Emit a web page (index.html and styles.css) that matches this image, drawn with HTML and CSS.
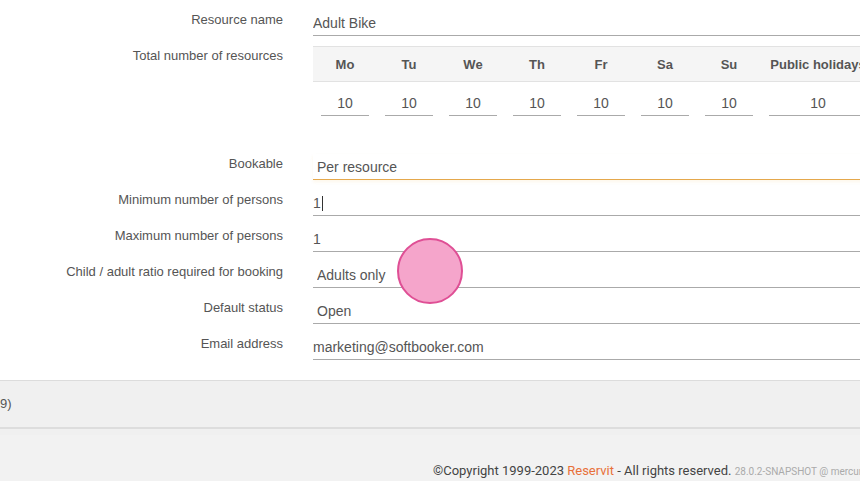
FILE: index.html
```html
<!DOCTYPE html>
<html lang="en">
<head>
    <meta charset="UTF-8">
    <meta name="viewport" content="width=device-width, initial-scale=1.0">
    <title>Resource settings</title>
    <link rel="stylesheet" href="styles.css">
</head>
<body>
    <div class="page">
        <form class="resource-form">
            <div class="row">
                <label>Resource name</label>
                <input class="field" type="text" value="Adult Bike">
            </div>
            <div class="row row-table">
                <label>Total number of resources</label>
                <table class="week-table">
                    <colgroup>
                        <col><col><col><col><col><col><col>
                        <col class="holiday">
                    </colgroup>
                    <thead>
                        <tr>
                            <th>Mo</th><th>Tu</th><th>We</th><th>Th</th>
                            <th>Fr</th><th>Sa</th><th>Su</th>
                            <th>Public holidays</th>
                        </tr>
                    </thead>
                    <tbody>
                        <tr>
                            <td><input type="text" value="10"></td>
                            <td><input type="text" value="10"></td>
                            <td><input type="text" value="10"></td>
                            <td><input type="text" value="10"></td>
                            <td><input type="text" value="10"></td>
                            <td><input type="text" value="10"></td>
                            <td><input type="text" value="10"></td>
                            <td><input type="text" value="10"></td>
                        </tr>
                    </tbody>
                </table>
            </div>
            <div class="row">
                <label>Bookable</label>
                <select class="field select active">
                    <option>Per resource</option>
                </select>
            </div>
            <div class="row">
                <label>Minimum number of persons</label>
                <div class="field with-caret"><span>1</span><span class="caret"></span></div>
            </div>
            <div class="row">
                <label>Maximum number of persons</label>
                <input class="field" type="text" value="1">
            </div>
            <div class="row">
                <label>Child / adult ratio required for booking</label>
                <select class="field select">
                    <option>Adults only</option>
                </select>
            </div>
            <div class="row">
                <label>Default status</label>
                <select class="field select">
                    <option>Open</option>
                </select>
            </div>
            <div class="row">
                <label>Email address</label>
                <input class="field" type="text" value="marketing@softbooker.com">
            </div>
        </form>

        <div class="panel-bar">9)</div>

        <footer class="footer">
            ©Copyright 1999-2023 <a href="#">Reservit</a> - All rights reserved.
            <span class="version">28.0.2-SNAPSHOT @ mercure</span>
        </footer>
    </div>

    <!-- click marker -->
    <div class="click-mark"></div>
</body>
</html>
```

FILE: styles.css
```css
/* Page */
body {
    margin: 0;
    background-color: #fff;
    color: #555;
    font-family: "Liberation Sans", Arial, sans-serif;
    overflow: hidden;
}

.page {
    width: 1100px;
    min-height: 481px;
    display: flex;
    flex-direction: column;
}

/* Form rows */
.resource-form {
    padding: 10px 0 0;
    display: flex;
    flex-direction: column;
}

.row {
    display: grid;
    grid-template-columns: 283px 1fr;
    column-gap: 30px;
    margin-bottom: 10px;
}

.row label {
    font-size: 13px;
    line-height: 16px;
    padding-top: 2px;
    text-align: right;
    color: #555;
}

.row-table {
    margin-bottom: 30px;
}

.field {
    box-sizing: border-box;
    height: 26px;
    margin: 0;
    padding: 0;
    border: none;
    border-bottom: 1px solid #aaa;
    background: transparent;
    font-family: "Liberation Sans", Arial, sans-serif;
    font-size: 14px;
    color: #555;
    outline: none;
}

.select {
    -webkit-appearance: none;
    appearance: none;
    padding-left: 4px;
}

.select.active {
    border-bottom: 1px solid #e5a84c; /* orange focus line */
    box-shadow: 0 2px 3px rgba(240, 200, 120, 0.15);
}

.with-caret {
    display: flex;
    align-items: center;
    padding-top: 1px;
}

.caret {
    display: inline-block;
    width: 1px;
    height: 15px;
    background: #333;
    margin-left: 1px;
}

/* Week table */
.week-table {
    border-collapse: collapse;
    table-layout: fixed;
    width: 562px;
}

.week-table col {
    width: 64px;
}

.week-table col.holiday {
    width: 114px;
}

.week-table th {
    height: 34px;
    padding: 0 8px;
    background: #f5f5f5;
    border-top: 1px solid #e2e2e2;
    border-bottom: 1px solid #e2e2e2;
    font-size: 13px;
    font-weight: bold;
    color: #555;
    text-align: center;
    white-space: nowrap;
    overflow: hidden;
}

.week-table td {
    padding: 8px;
}

.week-table td input {
    box-sizing: border-box;
    width: 100%;
    height: 26px;
    padding: 0;
    border: none;
    border-bottom: 1px solid #aaa;
    font-family: "Liberation Sans", Arial, sans-serif;
    font-size: 14px;
    color: #555;
    text-align: center;
    outline: none;
}

/* Grey panel below the form */
.panel-bar {
    margin-top: 10px;
    height: 46px;
    line-height: 46px;
    background: #f0f0f0;
    border-top: 1px solid #dcdcdc;
    border-bottom: 2px solid #dddddd;
    font-size: 13px;
    color: #555;
}

/* Footer */
.footer {
    flex: 1;
    background: #f2f2f2;
    border-top: 6px solid #f0f0f0;
    padding: 28px 0 0 433px;
    font-family: Roboto, "Liberation Sans", sans-serif;
    font-size: 13px;
    color: #444;
    white-space: nowrap;
}

.footer a {
    color: #e8703a;
    text-decoration: none;
}

.version {
    font-size: 10px;
    color: #aaa;
}

/* Click indicator drawn over the page */
.click-mark {
    position: absolute;
    left: 397px;
    top: 238px;
    width: 62px;
    height: 62px;
    border-radius: 50%;
    background: #f5a5cb;
    border: 2px solid #df4f95;
}
```
